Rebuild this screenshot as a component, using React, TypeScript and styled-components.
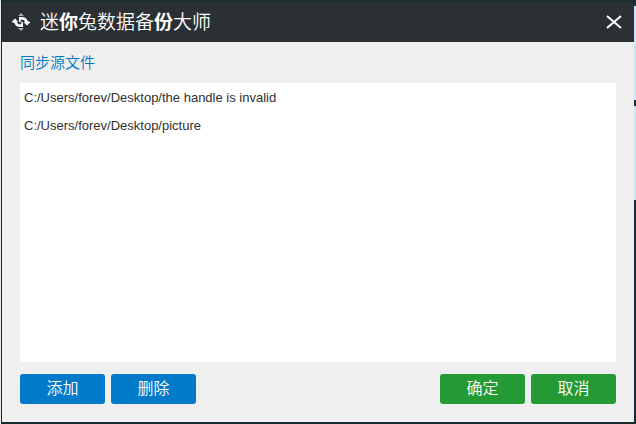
import React, { useState } from "react";
import styled, { createGlobalStyle } from "styled-components";

const GlobalStyle = createGlobalStyle`
  * { box-sizing: border-box; }
  body {
    margin: 0;
    background: #1b2c31;
    font-family: "Liberation Sans", "Noto Sans CJK SC", sans-serif;
  }
`;

const Desktop = styled.div`
  display: flex;
  min-height: 100vh;
  padding: 2px 0 2px 1px;
  border-left: 1px solid #e4e8e9;
`;

const Dialog = styled.main`
  flex: 1;
  display: flex;
  flex-direction: column;
  background: #efefef;
`;

const TitleBar = styled.header`
  display: flex;
  align-items: center;
  gap: 9px;
  height: 40px;
  padding: 0 10px 0 9px;
  background: #2b3034;
  color: #fff;
`;

const Title = styled.h1`
  flex: 1;
  margin: 0;
  padding-top: 2px;
  font-size: 19px;
  line-height: 24px;
  font-weight: 350;
  white-space: nowrap;
`;

const Strong = styled.b`
  font-weight: 700;
`;

const CloseButton = styled.button`
  display: flex;
  padding: 2px;
  border: 0;
  background: none;
  color: #fff;
  cursor: pointer;
`;

const Content = styled.section`
  flex: 1;
  display: flex;
  flex-direction: column;
  padding: 9px 18px 18px;
`;

const Heading = styled.h2`
  margin: 0 0 8px;
  font-size: 15px;
  line-height: 24px;
  font-weight: 350;
  color: #007ac9;
`;

const FileList = styled.ul`
  flex: 1;
  margin: 0;
  padding: 1px 4px;
  list-style: none;
  background: #fff;
`;

const FileItem = styled.li`
  font-size: 13px;
  line-height: 28px;
  color: #303030;
`;

const Actions = styled.footer`
  display: flex;
  justify-content: space-between;
  margin-top: 12px;
`;

const ActionGroup = styled.div`
  display: flex;
  gap: 6px;
`;

const ActionButton = styled.button<{ $tone: "blue" | "green" }>`
  width: 85px;
  height: 30px;
  padding: 0;
  border: 0;
  border-radius: 3px;
  background: ${({ $tone }) => ($tone === "blue" ? "#007ac9" : "#249a34")};
  color: #fff;
  font-family: inherit;
  font-size: 16px;
  line-height: 30px;
  font-weight: 350;
  cursor: pointer;
`;

const Backdrop = styled.div`
  display: flex;
  flex-direction: column;
  gap: 6px;
  width: 2px;
  margin-top: 4px;
`;

const BackdropPane = styled.div`
  height: 94px;
  background: #cbe8fa;
`;

const SyncIcon = () => (
  <svg width="20" height="20" viewBox="0 0 20 20" aria-hidden="true">
    <path d="M7 4 10 1l3 3zM7 16h6l-3 3z" fill="#a8abad" />
    <g fill="#fff">
      <path d="M0.500 10 4 6.500 7.500 10H6q0.500 2.500 4 2.500V11l2 1.500V15h-3Q4.500 15 3.500 11z" />
      <path d="M19.500 10 16 13.500 12.500 10H14q-0.500-2.500-4-2.500V9L8 7.500V5h3q4.500 0 5.500 4z" />
    </g>
    <path d="M8.500 7v2.500l3 1V13" fill="none" stroke="#fff" strokeWidth="1" />
  </svg>
);

const files = [
  "C:/Users/forev/Desktop/the handle is invalid",
  "C:/Users/forev/Desktop/picture",
];

export default function App() {
  const [open, setOpen] = useState(true);
  return (
    <>
      <GlobalStyle />
      <Desktop>
        {open && (
          <Dialog>
            <TitleBar>
              <SyncIcon />
              <Title>
                迷<Strong>你</Strong>兔数据备<Strong>份</Strong>大师
              </Title>
              <CloseButton type="button" aria-label="关闭" onClick={() => setOpen(false)}>
                <svg width="16" height="16" viewBox="0 0 16 16" fill="none" stroke="currentColor" strokeWidth="2">
                  <path d="M1 2 15 14M15 2 1 14" />
                </svg>
              </CloseButton>
            </TitleBar>
            <Content>
              <Heading id="source-files">同步源文件</Heading>
              <FileList aria-labelledby="source-files">
                {files.map((file) => (
                  <FileItem key={file}>{file}</FileItem>
                ))}
              </FileList>
              <Actions>
                <ActionGroup>
                  <ActionButton type="button" $tone="blue">添加</ActionButton>
                  <ActionButton type="button" $tone="blue">删除</ActionButton>
                </ActionGroup>
                <ActionGroup>
                  <ActionButton type="button" $tone="green">确定</ActionButton>
                  <ActionButton type="button" $tone="green">取消</ActionButton>
                </ActionGroup>
              </Actions>
            </Content>
          </Dialog>
        )}
        <Backdrop aria-hidden="true">
          <BackdropPane />
          <BackdropPane />
        </Backdrop>
      </Desktop>
    </>
  );
}
